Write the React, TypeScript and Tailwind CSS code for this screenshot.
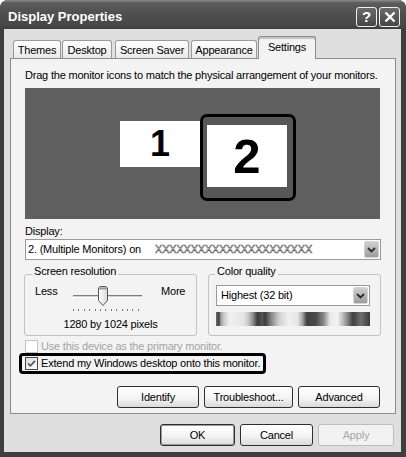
import React from 'react';

const ui = "[font-family:'Liberation_Sans',Arial,sans-serif] text-[11px] leading-[13px] tracking-[-0.2px]";

interface ButtonProps {
  label: string;
  className?: string;
  disabled?: boolean;
  isDefault?: boolean;
}

const Button: React.FC<ButtonProps> = ({ label, className = '', disabled = false, isDefault = false }) => (
  <div
    className={`flex h-[22px] items-center justify-center rounded-[3px] border ${
      disabled
        ? 'border-[#bdbdbd] bg-[#f2f2f2] text-[#a6a6a6]'
        : 'border-[#2e2e2e] bg-[linear-gradient(to_bottom,#ffffff_0%,#f4f4f4_55%,#dadada_100%)] text-black'
    } ${isDefault ? 'shadow-[inset_0_0_0_1px_#9c9c9c]' : ''} ${className}`}
  >
    {label}
  </div>
);

interface TabProps {
  label: string;
  className: string;
  active?: boolean;
}

const Tab: React.FC<TabProps> = ({ label, className, active = false }) =>
  active ? (
    <div
      className={`relative z-10 -mb-px flex h-[23px] items-center justify-center rounded-t-[3px] border border-b-0 border-[#8c8c8c] bg-[#f3f3f3] pb-[2px] shadow-[inset_0_2px_0_#c4c4c4] ${className}`}
    >
      {label}
    </div>
  ) : (
    <div
      className={`flex h-[18px] items-center justify-center rounded-t-[3px] border border-b-0 border-[#9a9a9a] bg-[linear-gradient(to_bottom,#ffffff,#e9e9e9)] pt-[2px] ${className}`}
    >
      {label}
    </div>
  );

const ComboArrow: React.FC = () => (
  <div className="flex h-[17px] w-[15px] items-center justify-center rounded-[2px] border border-[#d4d4d4] bg-[linear-gradient(to_bottom,#cfcfcf,#9d9d9d)]">
    <svg width="9" height="6" viewBox="0 0 9 6">
      <path d="M1 1 L4.5 4.5 L8 1" fill="none" stroke="#2b2b2b" strokeWidth="1.8" />
    </svg>
  </div>
);

const App: React.FC = () => {
  const ticks = Array.from({ length: 13 }, (_, i) => i);

  return (
    <div className={`${ui} flex h-[457px] w-[406px] flex-col overflow-hidden rounded-t-[8px] bg-[#3f3f3f] text-black`}>
      {/* title bar */}
      <div className="flex h-[29px] items-center bg-[linear-gradient(to_bottom,#8c8c8c_0%,#5c5c5c_10%,#4f4f4f_45%,#484848_85%,#3d3d3d_100%)] pl-[8px] pt-[4px]">
        <span className="text-[13px] font-bold leading-[16px] tracking-normal text-white">Display Properties</span>
        <div className="ml-auto mr-[6px] flex gap-[2px]">
          <div className="flex h-[20px] w-[21px] items-center justify-center rounded-[3px] border border-[#f0f0f0] bg-[linear-gradient(to_bottom,#6a6a6a,#474747)] text-[15px] font-bold leading-[16px] text-white">
            ?
          </div>
          <div className="flex h-[20px] w-[21px] items-center justify-center rounded-[3px] border border-[#f0f0f0] bg-[linear-gradient(to_bottom,#6a6a6a,#474747)]">
            <svg width="12" height="12" viewBox="0 0 12 12">
              <path d="M1.5 1.5 L10.5 10.5 M10.5 1.5 L1.5 10.5" stroke="#ffffff" strokeWidth="2.4" />
            </svg>
          </div>
        </div>
      </div>

      {/* body */}
      <div className="ml-[4px] mr-[5px] flex h-[423px] flex-col bg-[#dfdfdf] pt-[7px]">
        <div className="ml-[6px] flex items-end">
          <Tab label="Themes" className="ml-[3px] w-[48px]" />
          <Tab label="Desktop" className="ml-[1px] w-[50px]" />
          <Tab label="Screen Saver" className="ml-[3px] w-[74px]" />
          <Tab label="Appearance" className="ml-[2px] w-[66px]" />
          <Tab label="Settings" className="ml-[1px] w-[58px]" active />
        </div>

        <div className="ml-[6px] flex h-[356px] w-[386px] flex-col border border-[#8c8c8c] bg-[#f3f3f3] px-[14px]">
          <p className="mt-[10px] whitespace-nowrap">Drag the monitor icons to match the physical arrangement of your monitors.</p>

          {/* monitor arrangement */}
          <div className="relative mt-[6px] h-[131px] w-[355px] bg-[#5f5f5f]">
            <div className="absolute left-[95px] top-[33px] flex h-[46px] w-[80px] items-center justify-center bg-white text-[36px] font-bold leading-[36px] tracking-normal">
              1
            </div>
            <div className="absolute left-[175px] top-[26px] h-[87px] w-[96px] rounded-[7px] border-[3px] border-black bg-[#575757] pl-[4px] pt-[8px]">
              <div className="flex h-[62px] w-[80px] items-center justify-center bg-white text-[49px] font-bold leading-[49px] tracking-normal">
                2
              </div>
            </div>
          </div>

          <p className="mt-[6px]">Display:</p>
          <div className="mt-[1px] flex h-[21px] w-[356px] items-center border border-[#9a9a9a] bg-white pl-[2px] pr-[1px]">
            <span>2. (Multiple Monitors) on</span>
            <span className="ml-[14px] text-transparent [-webkit-text-stroke:0.5px_#555555]">XXXXXXXXXXXXXXXXXXXXXX</span>
            <div className="ml-auto">
              <ComboArrow />
            </div>
          </div>

          {/* group boxes */}
          <div className="-ml-px mt-[14px] flex gap-[11px]">
            <div className="relative h-[62px] w-[173px] rounded-[3px] border border-[#c2c2c2]">
              <span className="absolute left-[7px] top-[-10px] bg-[#f3f3f3] px-[2px]">Screen resolution</span>
              <div className="flex flex-col pt-[10px]">
                <div className="flex items-start pl-[10px]">
                  <span className="w-[36px]">Less</span>
                  <div className="flex w-[73px] flex-col">
                    <div className="relative h-[22px]">
                      <div className="absolute left-[2px] top-[10px] h-[3px] w-[69px] border-b border-t border-b-white border-t-[#7c7c7c] bg-[#cfcfcf]" />
                      <svg className="absolute left-[26px] top-[1px]" width="12" height="21" viewBox="0 0 12 21">
                        <defs>
                          <linearGradient id="thumb" x1="0" y1="0" x2="1" y2="0">
                            <stop offset="0" stopColor="#ffffff" />
                            <stop offset="1" stopColor="#d8d8d8" />
                          </linearGradient>
                        </defs>
                        <path
                          d="M1.5 3 Q1.5 0.5 4 0.5 H8 Q10.5 0.5 10.5 3 V14.5 L6 19.5 L1.5 14.5 Z"
                          fill="url(#thumb)"
                          stroke="#555555"
                          strokeWidth="1"
                        />
                        <path d="M2 2.5 H10" stroke="#9a9a9a" strokeWidth="2" />
                      </svg>
                    </div>
                    <div className="ml-[2px] mt-[2px] flex h-[2px] w-[66px] justify-between">
                      {ticks.map((t) => (
                        <div key={t} className="h-[2px] w-px bg-[#777777]" />
                      ))}
                    </div>
                  </div>
                  <span className="ml-[17px]">More</span>
                </div>
                <p className="mt-[7px] text-center">1280 by 1024 pixels</p>
              </div>
            </div>

            <div className="relative h-[62px] w-[173px] rounded-[3px] border border-[#c2c2c2]">
              <span className="absolute left-[6px] top-[-10px] bg-[#f3f3f3] px-[2px]">Color quality</span>
              <div className="flex flex-col pl-[7px] pt-[10px]">
                <div className="flex h-[21px] w-[154px] items-center border border-[#9a9a9a] bg-white pl-[4px] pr-[1px]">
                  <span>Highest (32 bit)</span>
                  <div className="ml-auto">
                    <ComboArrow />
                  </div>
                </div>
                <div className="mt-[6px] h-[14px] w-[154px] bg-[linear-gradient(to_right,#6a6a6a_0%,#404040_2%,#9a9a9a_3%,#c8c8c8_5%,#f2f2f2_9%,#e4e4e4_18%,#c6c6c6_21%,#8c8c8c_24%,#3a3a3a_27%,#555555_30%,#3c3c3c_32%,#8a8a8a_36%,#d0d0d0_41%,#f0f0f0_47%,#e6e6e6_53%,#a8a8a8_56%,#404040_59%,#4a4a4a_65%,#8a8a8a_70%,#e8e8e8_74%,#f2f2f2_79%,#a0a0a0_84%,#3e3e3e_89%,#707070_94%,#3a3a3a_100%)]" />
              </div>
            </div>
          </div>

          {/* checkboxes */}
          <div className="mt-[4px] flex h-[13px] items-center gap-[3px]">
            <div className="h-[13px] w-[13px] border border-[#c4c4c4] bg-white" />
            <span className="text-[#a3a3a3]">Use this device as the primary monitor.</span>
          </div>
          <div className="-ml-[6px] flex h-[21px] w-[247px] items-center gap-[3px] rounded-[4px] border-[3px] border-black pl-[3px]">
            <div className="flex h-[13px] w-[13px] items-center justify-center border border-[#4a4a4a] bg-[linear-gradient(to_bottom_right,#dcdcdc,#ffffff)]">
              <svg width="9" height="9" viewBox="0 0 9 9">
                <path d="M1 4.3 L3.4 6.8 L8 1.8" fill="none" stroke="#5a5a5a" strokeWidth="1.8" />
              </svg>
            </div>
            <span className="whitespace-nowrap">Extend my Windows desktop onto this monitor.</span>
          </div>

          <div className="mr-[1px] mt-[12px] flex justify-end gap-[5px]">
            <Button label="Identify" className="w-[82px]" />
            <Button label="Troubleshoot..." className="w-[89px]" />
            <Button label="Advanced" className="w-[82px]" />
          </div>
        </div>

        <div className="mt-[10px] flex justify-end gap-[5px] pr-[7px]">
          <Button label="OK" className="w-[75px]" isDefault />
          <Button label="Cancel" className="w-[73px]" />
          <Button label="Apply" className="w-[76px]" disabled />
        </div>
      </div>
    </div>
  );
};

export default App;
